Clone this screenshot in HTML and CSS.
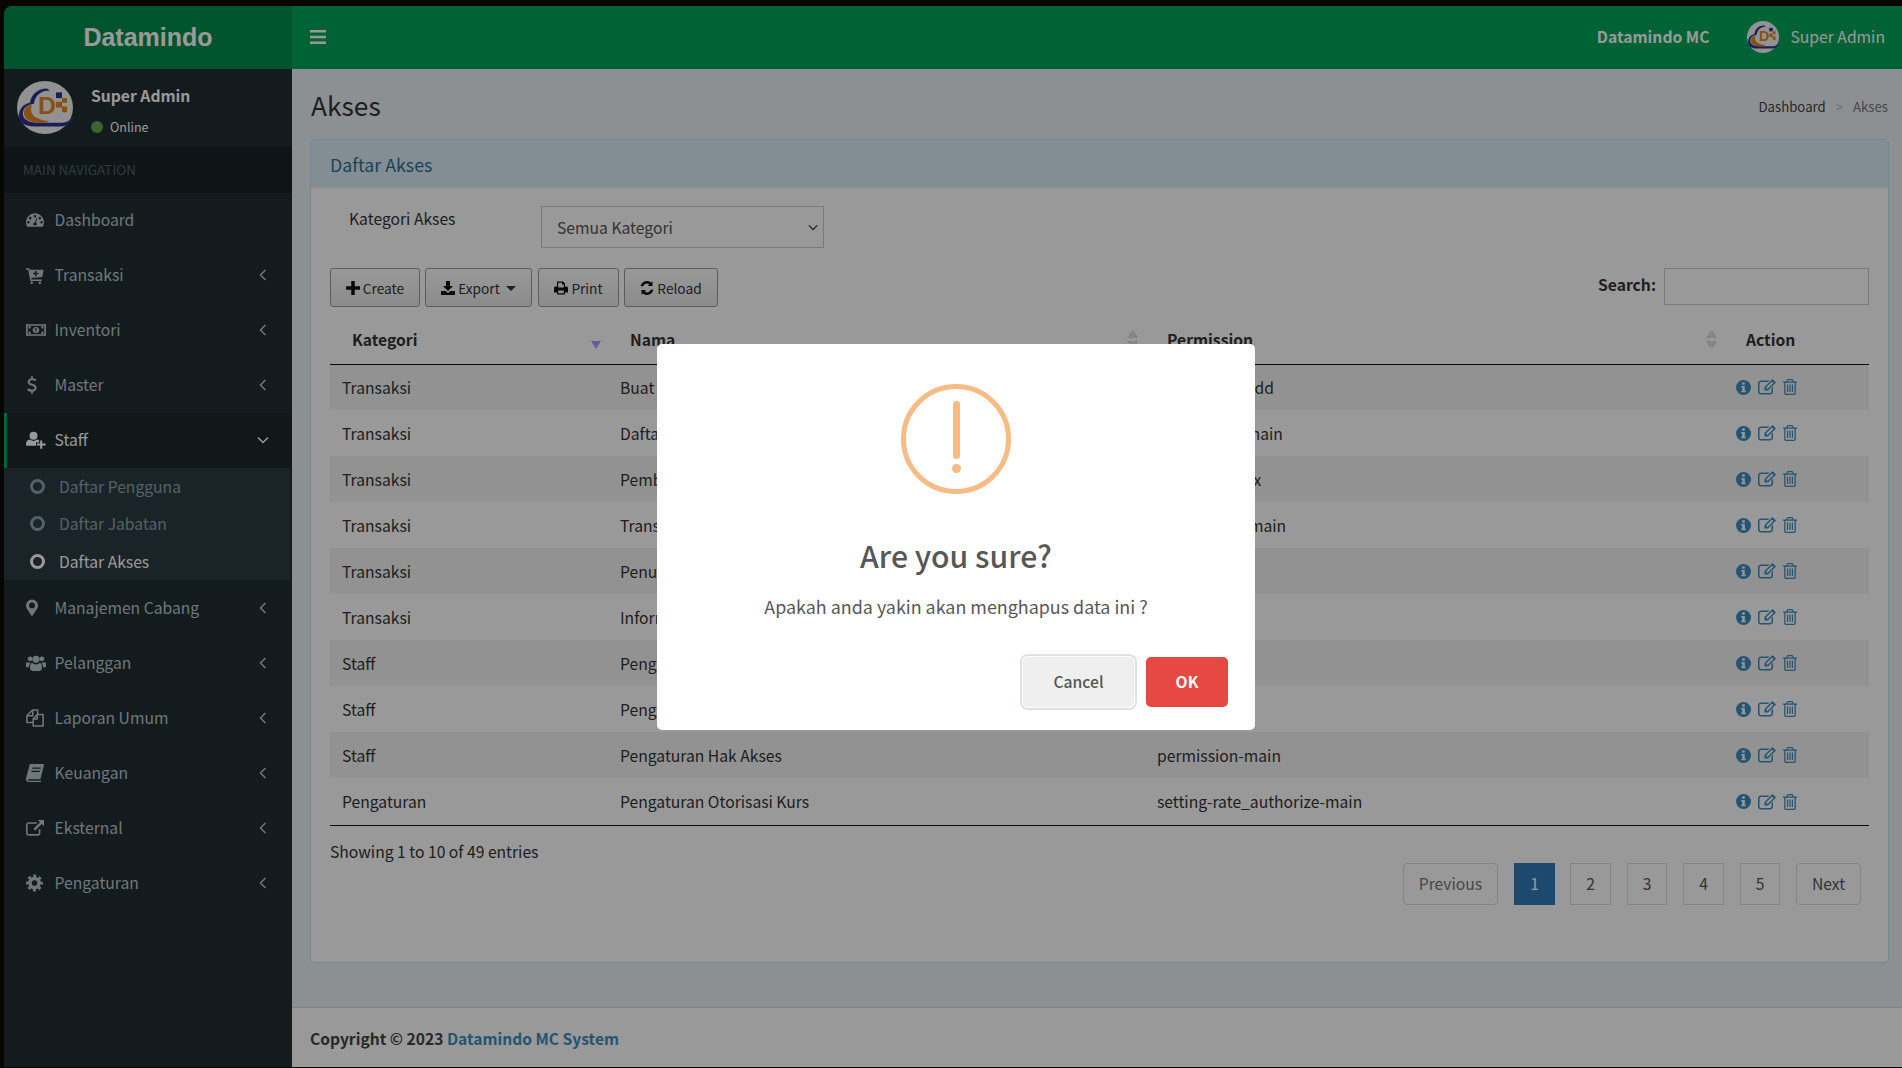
FILE: index.html
```html
<!DOCTYPE html>
<html>
<head>
    <meta charset="UTF-8">
    <title>Datamindo MC</title>
    <link rel="stylesheet" href="styles.css">
</head>
<body>
    <!-- Shared icons -->
    <svg class="sprite" xmlns="http://www.w3.org/2000/svg">
        <symbol id="i-logo" viewBox="0 0 56 56">
            <circle cx="28" cy="28" r="28" fill="#f4f4f4"/>
            <path d="M2 37c0-8 5-13 11-14 1-9 8-15 17-15l3 2c-9 0-15 5-16 14-7 1-12 5-11 12 1 5 6 8 13 8h26c5 0 9-3 11-7l-1 5c-3 4-7 6-11 6H17C8 48 2 44 2 37z" fill="#2e3192"/>
            <path d="M7 34c0-5 3-8 8-9-2 5-1 11 5 14 4 2 8 3 12 3l-3 2c-10 1-22-1-22-10z" fill="#e8841a"/>
            <rect x="39" y="12" width="6" height="6" fill="#2e3192"/>
            <rect x="39" y="22" width="6" height="6" fill="#e8841a"/>
            <rect x="45" y="18" width="5" height="5" fill="#e8841a"/>
            <rect x="45" y="27" width="5" height="6" fill="#e8841a"/>
        </symbol>
        <symbol id="i-bars" viewBox="0 0 16 14">
            <path d="M0 0h16v2.600H0zM0 5.700h16v2.600H0zM0 11.400h16V14H0z"/>
        </symbol>
        <symbol id="i-dashboard" viewBox="0 0 24 24">
            <path fill-rule="evenodd" d="M12 3C5.400 3 0 8.400 0 15c0 2 .5 4 1.400 5.600.2.300.5.400.8.400h19.600c.3 0 .6-.1.8-.4C23.500 19 24 17 24 15c0-6.600-5.400-12-12-12zM12 5.200a1.700 1.700 0 1 1 0 3.400 1.700 1.700 0 0 1 0-3.400zM5.600 7.800a1.700 1.700 0 1 1 0 3.400 1.700 1.700 0 0 1 0-3.400zM18.400 7.800a1.700 1.700 0 1 1 0 3.400 1.700 1.700 0 0 1 0-3.400zM3.200 13.400a1.700 1.700 0 1 1 0 3.400 1.700 1.700 0 0 1 0-3.400zM20.800 13.400a1.700 1.700 0 1 1 0 3.400 1.700 1.700 0 0 1 0-3.400zM14 9l.9.3-1.500 6.400c.6.500 1 1.200 1 2 0 .5-.1 1-.4 1.300H10c-.3-.3-.4-.8-.4-1.300 0-1.300 1-2.300 2.400-2.400z"/>
        </symbol>
        <symbol id="i-cart" viewBox="0 0 24 24">
            <path fill-rule="evenodd" d="M0 3h4.400l.6 2h18.500l-1.800 9.500L7 16l.4 2H21v2H5.700L3 5H0zM12 6.500v2.500H9.500v2H12v2.500h2V11h2.500V9H14V6.500zM7.500 20.500a1.700 1.700 0 1 1 0 3.400 1.700 1.700 0 0 1 0-3.400zM18.500 20.500a1.700 1.700 0 1 1 0 3.400 1.700 1.700 0 0 1 0-3.400z"/>
        </symbol>
        <symbol id="i-money" viewBox="0 0 24 16">
            <path fill-rule="evenodd" d="M0 1h24v14H0zM2 3v10h20V3zM12 4.300c2.300 0 4 1.700 4 3.700s-1.700 3.700-4 3.700-4-1.700-4-3.700 1.700-3.700 4-3.700zM11.300 5.500v.8l-.8.300v.8h.8v2.400h1.400v-4.300zM3 3.500h3A3 3 0 0 1 3 6.500zM21 3.500h-3a3 3 0 0 0 3 3zM3 12.500h3a3 3 0 0 0-3-3zM21 12.500h-3a3 3 0 0 1 3-3z"/>
        </symbol>
        <symbol id="i-dollar" viewBox="0 0 12 22">
            <path d="M5 0h2v2.600c1.800.2 3.400.8 4.500 1.600L10 6.500C8.800 5.700 7.400 5.200 6 5.200c-1.600 0-2.800.7-2.800 1.900 0 1.300 1.300 1.800 3.400 2.500 2.800.9 5.100 2 5.100 4.900 0 2.500-1.900 4.300-4.700 4.700V22H5v-2.700c-2-.2-3.800-1-5-2l1.500-2.400c1.400 1.100 3 1.700 4.500 1.700 1.900 0 3.100-.9 3.100-2.200s-1.200-1.900-3.400-2.600C3 10.900.7 9.800.7 7.200.7 4.800 2.400 3 5 2.600z"/>
        </symbol>
        <symbol id="i-userplus" viewBox="0 0 24 20">
            <circle cx="9" cy="5" r="4.800"/>
            <path d="M5 9.500c1 1 2.500 1.600 4 1.600s3-.6 4-1.600c1 .1 2 .5 2.800 1.100V13h-3.800v4H.6C.2 16.800 0 16.300 0 15.500c0-3 1.200-5.800 5-6zM17 10.500h2.500v3.700H23.500v2.400h-4V20.500H17v-3.900h-4v-2.400h4z"/>
        </symbol>
        <symbol id="i-marker" viewBox="0 0 14 20">
            <path fill-rule="evenodd" d="M7 0a7 7 0 0 0-7 7c0 1.500.5 2.500 1 3.600L7 20l6-9.400c.5-1.100 1-2.100 1-3.600a7 7 0 0 0-7-7zM7 3.600a3.400 3.400 0 1 1 0 6.800 3.400 3.400 0 0 1 0-6.800z"/>
        </symbol>
        <symbol id="i-users" viewBox="0 0 24 20">
            <circle cx="5" cy="5" r="2.900"/>
            <circle cx="19" cy="5" r="2.900"/>
            <circle cx="12" cy="5.500" r="4.300"/>
            <path d="M1 8.500c1 .8 2 1 3.500 1l.7 1.500C4 12 3.500 13.500 3.500 15H.8C.2 15 0 14.600 0 13.800 0 11.500.2 9.500 1 8.500zM23 8.500c-1 .8-2 1-3.500 1l-.7 1.500c1.200 1 1.700 2.500 1.700 4h2.700c.6 0 .8-.4.8-1.200 0-2.300-.2-4.300-1-5.300zM7.500 9.800c1.200 1.200 2.900 1.900 4.500 1.900s3.300-.7 4.500-1.900c2 .4 2.700 3 2.700 6 0 2.300-1.200 3.700-3 3.700H7.800c-1.800 0-3-1.400-3-3.700 0-3 .7-5.600 2.700-6z"/>
        </symbol>
        <symbol id="i-files" viewBox="0 0 20 20">
            <path fill="none" stroke="currentColor" stroke-width="1.700" stroke-linejoin="round" d="M7.500 1H13v5M7.500 1 1 7.500V15h7M7.500 1v6.500H1M12.500 6H19v13H8v-8zM12.500 6v5H8"/>
        </symbol>
        <symbol id="i-book" viewBox="0 0 20 20">
            <path fill-rule="evenodd" d="M5 0h14.500c.4 0 .6.300.5.700l-3.600 14.800c-.2.900-.8 1.500-1.700 1.500H2.600c-.5 0-.6.800 0 1.200.3.200.7.300 1.100.3h12.800l.6-.2-.4 1.700H3C1.200 20 0 18.500 0 16.500c0-.5 0-1 .3-1.500L3.900 1.300C4.100.5 4.400 0 5 0zM7.200 4l-.3 1.400h9.300l.3-1.400zM6.300 7.500 6 8.900h9.300l.3-1.400z"/>
        </symbol>
        <symbol id="i-external" viewBox="0 0 20 18">
            <path d="M3 2.500h9v1.800H3c-.7 0-1.200.5-1.200 1.200v9c0 .7.500 1.200 1.200 1.200h10c.7 0 1.200-.5 1.200-1.200v-4H16v4c0 1.700-1.300 3-3 3H3c-1.700 0-3-1.300-3-3v-9c0-1.700 1.300-3 3-3z"/>
            <path d="M13 0h7v7l-2.500-2.500-7.300 7.300-1.900-1.900 7.300-7.300z"/>
        </symbol>
        <symbol id="i-gear" viewBox="0 0 20 20">
            <circle cx="10" cy="10" r="5.400" fill="none" stroke="currentColor" stroke-width="4.200"/>
            <circle cx="10" cy="10" r="8.500" fill="none" stroke="currentColor" stroke-width="3" stroke-dasharray="3.400 3.280" stroke-dashoffset="1.700"/>
        </symbol>
        <symbol id="i-plus" viewBox="0 0 12 12">
            <path d="M4.500 0h3v4.500H12v3H7.500V12h-3V7.500H0v-3h4.500z"/>
        </symbol>
        <symbol id="i-download" viewBox="0 0 14 14">
            <path d="M5 0h4v5h3L7 10 2 5h3zM0 10h4.500L7 12l2.500-2H14v4H0z"/>
        </symbol>
        <symbol id="i-print" viewBox="0 0 14 13">
            <path fill-rule="evenodd" d="M3 0h6l2 2v3h1.500c.8 0 1.500.7 1.500 1.500V11h-3v2H3v-2H0V6.500C0 5.700.7 5 1.500 5H3zM4.200 1.200V6h5.600V3H8V1.200zM4.200 9v2.800h5.600V9z"/>
        </symbol>
        <symbol id="i-refresh" viewBox="0 0 14 14">
            <path d="M7 0c1.600 0 3 .6 4.100 1.500L12.500.2V5h-4.700l1.500-1.600A4 4 0 0 0 7 2.600c-1.800 0-3.100 1-3.800 2.600H.6C1.300 2.200 3.900 0 7 0zM1.500 9H6.200L4.700 10.600c.6.500 1.500.8 2.300.8 1.800 0 3.100-1 3.800-2.600h2.600C12.700 11.800 10.100 14 7 14c-1.600 0-3-.6-4.100-1.500L1.500 13.800z"/>
        </symbol>
        <symbol id="i-info" viewBox="0 0 16 16">
            <path fill-rule="evenodd" d="M8 0a8 8 0 1 1 0 16A8 8 0 0 1 8 0zM6.600 2.500v2.500h2.800V2.500zM5.600 6.500v1.500h1v3.500h-1v1.500h4.800v-1.500h-1V6.500z"/>
        </symbol>
        <symbol id="i-edit" viewBox="0 0 18 16">
            <path d="M3 1.500h8.500L10 3H3c-.8 0-1.500.7-1.500 1.500v8c0 .8.700 1.500 1.500 1.500h9c.8 0 1.500-.7 1.500-1.500V9L15 7.500v5c0 1.700-1.300 3-3 3H3c-1.700 0-3-1.300-3-3v-8c0-1.700 1.300-3 3-3z"/>
            <path d="M14.500 0 18 3.500 10 11.500H6.500V8zM8 8.500l1.500 1.500 6-6L14 2.500z"/>
        </symbol>
        <symbol id="i-trash" viewBox="0 0 14 16">
            <path fill-rule="evenodd" d="M4.500 0h5L11 2.500h3v1.300h-1.200V14c0 1.100-.8 2-1.800 2H3c-1 0-1.800-.9-1.800-2V3.800H0V2.500h3zM5 1.300l-.6 1.200h5.200L9 1.300zM2.500 3.800V14c0 .4.300.7.500.7h8c.2 0 .5-.3.500-.7V3.800zM4 5.500h1.200v7.500H4zM6.400 5.500h1.200v7.500H6.400zM8.800 5.500H10v7.500H8.800z"/>
        </symbol>
        <symbol id="i-left" viewBox="0 0 8 12">
            <path fill="none" stroke="currentColor" stroke-width="1.500" d="M6.500 1 1.500 6l5 5"/>
        </symbol>
        <symbol id="i-down" viewBox="0 0 12 8">
            <path fill="none" stroke="currentColor" stroke-width="1.500" d="M1 1.500 6 6.500l5-5"/>
        </symbol>
    </svg>

    <div class="app">
        <aside class="sidebar">
            <div class="brand">Datamindo</div>
            <div class="user-panel">
                <svg class="avatar" viewBox="0 0 56 56" preserveAspectRatio="none"><use href="#i-logo"/><text x="21" y="35" class="logo-d">D</text></svg>
                <div class="user-info">
                    <div class="user-name">Super Admin</div>
                    <div class="user-status"><span class="dot"></span>Online</div>
                </div>
            </div>
            <div class="nav-header">MAIN NAVIGATION</div>
            <ul class="nav">
                <li class="nav-item"><svg class="nav-ico ico-dash"><use href="#i-dashboard"/></svg><span class="nav-text">Dashboard</span></li>
                <li class="nav-item"><svg class="nav-ico"><use href="#i-cart"/></svg><span class="nav-text">Transaksi</span><svg class="angle"><use href="#i-left"/></svg></li>
                <li class="nav-item"><svg class="nav-ico ico-money"><use href="#i-money"/></svg><span class="nav-text">Inventori</span><svg class="angle"><use href="#i-left"/></svg></li>
                <li class="nav-item"><svg class="nav-ico ico-slim"><use href="#i-dollar"/></svg><span class="nav-text">Master</span><svg class="angle"><use href="#i-left"/></svg></li>
                <li class="nav-item active"><svg class="nav-ico ico-wide"><use href="#i-userplus"/></svg><span class="nav-text">Staff</span><svg class="angle-down"><use href="#i-down"/></svg></li>
                <li>
                    <ul class="subnav">
                        <li class="sub-item"><span class="ring"></span>Daftar Pengguna</li>
                        <li class="sub-item"><span class="ring"></span>Daftar Jabatan</li>
                        <li class="sub-item current"><span class="ring"></span>Daftar Akses</li>
                    </ul>
                </li>
                <li class="nav-item"><svg class="nav-ico ico-slim"><use href="#i-marker"/></svg><span class="nav-text">Manajemen Cabang</span><svg class="angle"><use href="#i-left"/></svg></li>
                <li class="nav-item"><svg class="nav-ico ico-wide"><use href="#i-users"/></svg><span class="nav-text">Pelanggan</span><svg class="angle"><use href="#i-left"/></svg></li>
                <li class="nav-item"><svg class="nav-ico"><use href="#i-files"/></svg><span class="nav-text">Laporan Umum</span><svg class="angle"><use href="#i-left"/></svg></li>
                <li class="nav-item"><svg class="nav-ico"><use href="#i-book"/></svg><span class="nav-text">Keuangan</span><svg class="angle"><use href="#i-left"/></svg></li>
                <li class="nav-item"><svg class="nav-ico"><use href="#i-external"/></svg><span class="nav-text">Eksternal</span><svg class="angle"><use href="#i-left"/></svg></li>
                <li class="nav-item"><svg class="nav-ico ico-gear"><use href="#i-gear"/></svg><span class="nav-text">Pengaturan</span><svg class="angle"><use href="#i-left"/></svg></li>
            </ul>
        </aside>

        <div class="main">
            <header class="topbar">
                <svg class="burger"><use href="#i-bars"/></svg>
                <div class="topbar-right">
                    <span class="company">Datamindo MC</span>
                    <svg class="avatar-sm" viewBox="0 0 56 56"><use href="#i-logo"/><text x="21" y="35" class="logo-d">D</text></svg>
                    <span class="top-user">Super Admin</span>
                </div>
            </header>

            <div class="content">
                <div class="page-head">
                    <h1>Akses</h1>
                    <div class="crumbs"><span class="crumb-link">Dashboard</span><span class="crumb-sep">&gt;</span><span class="crumb-now">Akses</span></div>
                </div>

                <section class="box">
                    <div class="box-head">Daftar Akses</div>
                    <div class="box-body">
                        <div class="filter">
                            <label class="filter-label">Kategori Akses</label>
                            <div class="fake-select">Semua Kategori<svg class="select-arrow"><use href="#i-down"/></svg></div>
                        </div>

                        <div class="tools">
                            <div class="btn-row">
                                <button class="btn btn-create"><svg class="btn-ico"><use href="#i-plus"/></svg>Create</button>
                                <button class="btn btn-export"><svg class="btn-ico"><use href="#i-download"/></svg>Export<span class="caret"></span></button>
                                <button class="btn btn-print"><svg class="btn-ico"><use href="#i-print"/></svg>Print</button>
                                <button class="btn btn-reload"><svg class="btn-ico"><use href="#i-refresh"/></svg>Reload</button>
                            </div>
                            <div class="search"><span>Search:</span><div class="search-box"></div></div>
                        </div>

                        <table class="grid">
                            <colgroup>
                                <col class="col-a"><col class="col-b"><col class="col-c"><col class="col-d">
                            </colgroup>
                            <thead>
                                <tr>
                                    <th><div class="th-in">Kategori<span class="sort-on"></span></div></th>
                                    <th><div class="th-in">Nama<span class="sort"></span></div></th>
                                    <th><div class="th-in">Permission<span class="sort"></span></div></th>
                                    <th><div class="th-in">Action</div></th>
                                </tr>
                            </thead>
                            <tbody>
                                <tr><td>Transaksi</td><td>Buat Transaksi</td><td>transaction-add</td><td><div class="acts"><svg class="act-info"><use href="#i-info"/></svg><svg class="act-edit"><use href="#i-edit"/></svg><svg class="act-trash"><use href="#i-trash"/></svg></div></td></tr>
                                <tr><td>Transaksi</td><td>Daftar Transaksi</td><td>transaction-main</td><td><div class="acts"><svg class="act-info"><use href="#i-info"/></svg><svg class="act-edit"><use href="#i-edit"/></svg><svg class="act-trash"><use href="#i-trash"/></svg></div></td></tr>
                                <tr><td>Transaksi</td><td>Pembayaran</td><td>voucher-index</td><td><div class="acts"><svg class="act-info"><use href="#i-info"/></svg><svg class="act-edit"><use href="#i-edit"/></svg><svg class="act-trash"><use href="#i-trash"/></svg></div></td></tr>
                                <tr><td>Transaksi</td><td>Transfer</td><td>transaction_main</td><td><div class="acts"><svg class="act-info"><use href="#i-info"/></svg><svg class="act-edit"><use href="#i-edit"/></svg><svg class="act-trash"><use href="#i-trash"/></svg></div></td></tr>
                                <tr><td>Transaksi</td><td>Penukaran</td><td>exchange</td><td><div class="acts"><svg class="act-info"><use href="#i-info"/></svg><svg class="act-edit"><use href="#i-edit"/></svg><svg class="act-trash"><use href="#i-trash"/></svg></div></td></tr>
                                <tr><td>Transaksi</td><td>Informasi</td><td>info</td><td><div class="acts"><svg class="act-info"><use href="#i-info"/></svg><svg class="act-edit"><use href="#i-edit"/></svg><svg class="act-trash"><use href="#i-trash"/></svg></div></td></tr>
                                <tr><td>Staff</td><td>Pengguna</td><td>user-main</td><td><div class="acts"><svg class="act-info"><use href="#i-info"/></svg><svg class="act-edit"><use href="#i-edit"/></svg><svg class="act-trash"><use href="#i-trash"/></svg></div></td></tr>
                                <tr><td>Staff</td><td>Pengaturan Jabatan</td><td>role-main</td><td><div class="acts"><svg class="act-info"><use href="#i-info"/></svg><svg class="act-edit"><use href="#i-edit"/></svg><svg class="act-trash"><use href="#i-trash"/></svg></div></td></tr>
                                <tr><td>Staff</td><td>Pengaturan Hak Akses</td><td>permission-main</td><td><div class="acts"><svg class="act-info"><use href="#i-info"/></svg><svg class="act-edit"><use href="#i-edit"/></svg><svg class="act-trash"><use href="#i-trash"/></svg></div></td></tr>
                                <tr class="row-last"><td>Pengaturan</td><td>Pengaturan Otorisasi Kurs</td><td>setting-rate_authorize-main</td><td><div class="acts"><svg class="act-info"><use href="#i-info"/></svg><svg class="act-edit"><use href="#i-edit"/></svg><svg class="act-trash"><use href="#i-trash"/></svg></div></td></tr>
                            </tbody>
                        </table>

                        <div class="table-foot">
                            <div class="entries">Showing 1 to 10 of 49 entries</div>
                            <div class="pager">
                                <span class="page page-edge page-prev">Previous</span>
                                <span class="page page-on">1</span>
                                <span class="page">2</span>
                                <span class="page page-thin">3</span>
                                <span class="page">4</span>
                                <span class="page page-thin">5</span>
                                <span class="page page-edge page-next">Next</span>
                            </div>
                        </div>
                    </div>
                </section>
            </div>

            <footer class="foot"><b>Copyright © 2023 <span class="foot-link">Datamindo MC System</span></b></footer>
        </div>
    </div>

    <!-- Confirm dialog, over the whole page -->
    <div class="overlay">
        <div class="modal">
            <div class="warn-icon"><span class="warn-bar"></span><span class="warn-dot"></span></div>
            <h2 class="modal-title">Are you sure?</h2>
            <p class="modal-text">Apakah anda yakin akan menghapus data ini ?</p>
            <div class="modal-actions">
                <button class="btn-cancel">Cancel</button>
                <button class="btn-ok">OK</button>
            </div>
        </div>
    </div>
</body>
</html>
```

FILE: styles.css
```css
/* Page frame */
* {
    box-sizing: border-box;
}
html, body {
    height: 100%;
}
body {
    margin: 0;
    background-color: #0c0a02;
    font-family: "Noto Sans CJK SC", "Noto Sans", sans-serif;
    font-size: 15.68px;
    color: #333;
    overflow: hidden;
}
ul {
    list-style: none;
    margin: 0;
    padding: 0;
}
svg {
    fill: currentColor;
    display: block;
}
.sprite {
    position: absolute;
    width: 0;
    height: 0;
}
.logo-d {
    font-family: "Liberation Sans", sans-serif;
    font-weight: bold;
    font-size: 25px;
    fill: #e8841a;
}
.app {
    display: flex;
    margin-top: 6px;
    margin-left: 4px;
    height: 1061px;
}

/* Sidebar */
.sidebar {
    width: 288px;
    flex: none;
    background-color: #222d32;
    border-top-left-radius: 8px;
    overflow: hidden;
}
.brand {
    height: 63px;
    line-height: 63px;
    background-color: #008d4c;
    color: #fff;
    text-align: center;
    font-family: "Liberation Sans", sans-serif;
    font-weight: bold;
    font-size: 25px;
}
.user-panel {
    height: 77px;
    display: flex;
    align-items: center;
    padding-left: 13px;
    padding-bottom: 1px;
}
.avatar {
    width: 56px;
    height: 53px;
    margin-right: 18px;
}
.user-info {
    padding-top: 7px;
}
.user-name {
    font-size: 15.68px;
    font-weight: 700;
    line-height: 22px;
    color: #fff;
}
.user-status {
    display: flex;
    align-items: center;
    margin-top: 10px;
    font-size: 12.500px;
    line-height: 20px;
    color: #fff;
}
.dot {
    width: 12px;
    height: 12px;
    border-radius: 50%;
    background-color: #5fa852;
    margin-right: 7px;
}
.nav-header {
    height: 47px;
    line-height: 47px;
    padding-left: 19px;
    background-color: #1a2226;
    color: #4b646f;
    font-size: 13.400px;
}
.nav-item {
    height: 55px;
    display: flex;
    align-items: center;
    padding-left: 22px;
    padding-right: 25px;
    padding-bottom: 2px;
    border-left: 3px solid transparent;
    color: #b8c7ce;
}
.nav-item.active {
    background-color: #1e282c;
    border-left-color: #00a65a;
    color: #fff;
    padding-left: 19px;
}
.nav-ico {
    width: 18px;
    height: 18px;
    margin-left: -3px;
    margin-right: 10.500px;
    flex: none;
}
.nav-item.active .nav-ico {
    margin-left: 0;
}
.ico-wide {
    width: 20px;
    margin-right: 8.500px;
}
.ico-money {
    width: 20px;
    margin-right: 8.500px;
}
.ico-slim {
    width: 12px;
    margin-right: 16.500px;
}
.ico-gear {
    width: 17px;
    margin-right: 11.500px;
}
.nav-text {
    flex: 1;
}
.angle {
    width: 8px;
    height: 12px;
    margin-top: 1px;
}
.angle-down {
    width: 12px;
    height: 8px;
    margin-top: 1px;
    margin-right: -2px;
}
.subnav {
    height: 112px;
    margin-right: 2px;
    margin-bottom: 1px;
    background-color: #2c3b41;
    color: #8aa4af;
}
.sub-item {
    height: 37px;
    display: flex;
    align-items: center;
    padding-left: 26px;
    padding-bottom: 1px;
}
.sub-item.current {
    color: #fff;
    height: 38px;
    padding-bottom: 0;
}
.ring {
    width: 15px;
    height: 15px;
    border: 3px solid currentColor;
    border-radius: 50%;
    margin-right: 14px;
}

/* Main column */
.main {
    flex: 1;
    min-width: 0;
    display: flex;
    flex-direction: column;
    background-color: #ecf0f5;
}
.topbar {
    height: 63px;
    flex: none;
    display: flex;
    align-items: center;
    justify-content: space-between;
    padding-left: 18px;
    padding-right: 17px;
    padding-bottom: 2px;
    background-color: #00a65a;
    color: #fff;
}
.burger {
    width: 16px;
    height: 14px;
}
.topbar-right {
    display: flex;
    align-items: center;
}
.company {
    font-weight: 700;
    margin-right: 37px;
}
.avatar-sm {
    width: 32px;
    height: 32px;
    margin-right: 12px;
}
.content {
    flex: 1;
    padding: 0 13px 0 18px;
}
.page-head {
    height: 70px;
    display: flex;
    align-items: center;
    justify-content: space-between;
}
.page-head h1 {
    margin: 0 0 0 1px;
    font-size: 26.300px;
    font-weight: 400;
    color: #333;
}
.crumbs {
    display: flex;
    font-size: 13.200px;
    color: #444;
    margin-top: 5px;
    margin-right: 1px;
}
.crumb-sep {
    margin: 0 10px;
    color: #bbb;
}
.crumb-now {
    color: #777;
}

/* Box */
.box {
    height: 824px;
    background-color: #fff;
    border: 1px solid #bce8f1;
    border-radius: 4px;
}
.box-head {
    height: 48px;
    line-height: 48px;
    padding-left: 19px;
    background-color: #d9edf7;
    color: #31708f;
    font-size: 17.800px;
}
.box-body {
    padding: 18px 19px 0 19px;
}
.filter {
    display: flex;
    align-items: flex-start;
    padding-left: 19px;
}
.filter-label {
    width: 192px;
    line-height: 26px;
}
.fake-select {
    width: 283px;
    height: 42px;
    line-height: 42px;
    padding-left: 15px;
    border: 1px solid #ccc;
    color: #555;
    position: relative;
}
.select-arrow {
    position: absolute;
    right: 5px;
    top: 17px;
    width: 10px;
    height: 7px;
    color: #333;
}
.tools {
    display: flex;
    justify-content: space-between;
    margin-top: 20px;
}
.btn-row {
    display: flex;
    gap: 5px;
}
.btn {
    height: 39px;
    display: flex;
    align-items: center;
    justify-content: center;
    border: 1px solid #999;
    border-radius: 3px;
    background: linear-gradient(to bottom, #fff 0%, #e9e9e9 100%);
    color: #333;
    font-family: inherit;
    font-size: 13.700px;
    padding: 0;
}
.btn-create {
    width: 90px;
}
.btn-export {
    width: 107px;
}
.btn-print {
    width: 81px;
    margin-left: 1px;
}
.btn-reload {
    width: 94px;
}
.btn-ico {
    width: 14px;
    height: 14px;
    margin-right: 3px;
    color: #111;
}
.caret {
    width: 0;
    height: 0;
    margin-left: 6px;
    margin-top: 2px;
    border-top: 5px solid #333;
    border-left: 5px solid transparent;
    border-right: 5px solid transparent;
}
.search {
    display: flex;
    font-weight: 700;
    line-height: 34px;
}
.search-box {
    width: 205px;
    height: 37px;
    margin-left: 8px;
    border: 1px solid #ccc;
}

/* Table */
.grid {
    width: 1539px;
    margin-top: 12px;
    table-layout: fixed;
    border-collapse: collapse;
    border-bottom: 1px solid #111;
}
.col-a {
    width: 278px;
}
.col-b {
    width: 537px;
}
.col-c {
    width: 579px;
}
.grid th {
    height: 45px;
    padding: 0 7px 4px 22px;
    text-align: left;
    font-weight: 700;
    border-bottom: 1px solid #111;
    color: #333;
}
.th-in {
    display: flex;
    justify-content: space-between;
    align-items: center;
}
.sort-on {
    width: 0;
    height: 0;
    margin-top: 11px;
    border-top: 8px solid #9f9fff;
    border-left: 5px solid transparent;
    border-right: 5px solid transparent;
}
.sort {
    width: 11px;
    height: 19px;
    background:
        linear-gradient(to top left, #ddd 50%, transparent 50%) left top / 50% 8px no-repeat,
        linear-gradient(to top right, #ddd 50%, transparent 50%) right top / 50% 8px no-repeat,
        linear-gradient(to bottom left, #ddd 50%, transparent 50%) left bottom / 50% 8px no-repeat,
        linear-gradient(to bottom right, #ddd 50%, transparent 50%) right bottom / 50% 8px no-repeat;
}
.grid td {
    height: 46px;
    padding: 0 12px;
    color: #333;
}
.grid .row-last td {
    height: 47px;
    padding-top: 1px;
}
.grid tbody tr:nth-child(odd) td {
    background-color: #f4f4f4;
}
.acts {
    display: flex;
    align-items: center;
    color: #3c8dbc;
}
.act-info {
    width: 15px;
    height: 15px;
    margin-right: 7px;
}
.act-edit {
    width: 18px;
    height: 16px;
    margin-right: 7px;
}
.act-trash {
    width: 14px;
    height: 16px;
}
.table-foot {
    display: flex;
    justify-content: space-between;
    align-items: flex-start;
}
.entries {
    margin-top: 14px;
    line-height: 24px;
}
.pager {
    display: flex;
    gap: 16px;
    margin-top: 37px;
    margin-right: 8px;
}
.page {
    width: 41px;
    height: 42px;
    line-height: 40px;
    text-align: center;
    border: 1px solid #ddd;
    color: #555;
}
.page-thin {
    width: 40px;
}
.page-edge {
    border-radius: 4px;
}
.page-prev {
    width: 95px;
    color: #777;
}
.page-next {
    width: 65px;
}
.page-on {
    background-color: #337ab7;
    border-color: #337ab7;
    color: #fff;
    margin-right: -1px;
}

/* Footer */
.foot {
    height: 60px;
    flex: none;
    display: flex;
    align-items: center;
    padding-left: 18px;
    padding-top: 1px;
    font-size: 15.600px;
    background-color: #fff;
    border-top: 1px solid #d2d6de;
    color: #444;
}
.foot-link {
    color: #3c8dbc;
}

/* Dialog */
.overlay {
    position: fixed;
    left: 0;
    top: 0;
    right: 0;
    bottom: 0;
    display: flex;
    align-items: center;
    justify-content: center;
    padding-left: 10px;
    padding-top: 6px;
    background-color: rgba(0, 0, 0, 0.4);
}
.modal {
    width: 598px;
    height: 386px;
    padding-top: 40px;
    background-color: #fff;
    border-radius: 5px;
    text-align: center;
}
.warn-icon {
    width: 110px;
    height: 110px;
    margin: 0 auto;
    position: relative;
    border: 5px solid #f8bb86;
    border-radius: 50%;
}
.warn-bar {
    position: absolute;
    left: 47px;
    top: 12px;
    width: 7px;
    height: 58px;
    border-radius: 4px;
    background-color: #f8bb86;
}
.warn-dot {
    position: absolute;
    left: 46px;
    top: 75px;
    width: 9px;
    height: 9px;
    border-radius: 50%;
    background-color: #f8bb86;
}
.modal-title {
    margin: 41px 0 0 0;
    font-size: 30.200px;
    line-height: 40px;
    font-weight: 500;
    color: #575757;
}
.modal-text {
    margin: 18px 0 0 0;
    font-size: 17.900px;
    line-height: 26px;
    color: #575757;
}
.modal-actions {
    display: flex;
    justify-content: flex-end;
    gap: 12px;
    margin-top: 38px;
    padding-right: 27px;
}
.btn-cancel, .btn-ok {
    height: 50px;
    border: 0;
    border-radius: 5px;
    padding: 0 0 2px 0;
    font-family: inherit;
    font-size: 15.700px;
    font-weight: 500;
}
.btn-cancel {
    width: 111px;
    background-color: #efefef;
    color: #555;
    box-shadow: 0 0 0 1px #fff, 0 0 0 3px #dde2e8;
}
.btn-ok {
    width: 82px;
    background-color: #e64942;
    color: #fff;
    font-weight: 700;
}
```
